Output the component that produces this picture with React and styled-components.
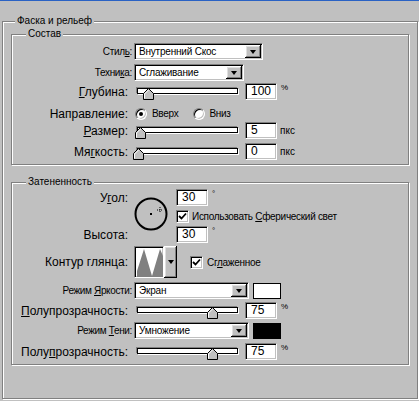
import React from "react";
import styled, { createGlobalStyle } from "styled-components";

const GlobalStyle = createGlobalStyle`
  html, body {
    margin: 0;
    padding: 0;
    background: #c0c0c0;
  }
  body {
    width: 419px;
    height: 401px;
    overflow: hidden;
    font-family: "Liberation Sans", Arial, sans-serif;
    color: #000;
  }
`;

const Window = styled.div`
  width: 419px;
  height: 401px;
  box-sizing: border-box;
  background: #c0c0c0;
  border-top: 1px solid #2a62c4;
  padding: 20px 0 0 2px;
`;

const Frame = styled.div`
  position: relative;
  box-sizing: border-box;
  border: 1px solid #808080;
  box-shadow: inset 1px 1px 0 #fff, 1px 1px 0 #fff;
`;

const OuterGroup = styled(Frame)`
  width: 416px;
  height: 378px;
  padding: 12px 0 0 8px;
`;

const Group = styled(Frame)`
  width: 398px;
  margin-top: ${(p) => p.$mt || 0}px;
  padding: ${(p) => p.$pt}px 0 4px 0;
`;

const Caption = styled.span`
  position: absolute;
  top: -7px;
  left: ${(p) => p.$left}px;
  padding: 0 2px;
  background: #c0c0c0;
  font-size: 10px;
  line-height: 12px;
  white-space: nowrap;
`;

const Row = styled.div`
  display: flex;
  align-items: center;
  height: ${(p) => p.$h || 17}px;
  margin-top: ${(p) => p.$mt || 0}px;
`;

const Label = styled.div`
  width: 120px;
  flex: none;
  box-sizing: border-box;
  margin-right: 2px;
  padding-right: ${(p) => (p.$big ? 4 : 0)}px;
  text-align: right;
  white-space: nowrap;
  font-size: ${(p) => (p.$big ? 12 : 10)}px;
  letter-spacing: ${(p) => (p.$big ? 0 : -0.35)}px;
`;

const Key = styled.u`
  text-decoration: underline;
  text-underline-offset: 1px;
`;

const Sunken = styled.div`
  box-sizing: border-box;
  flex: none;
  background: #fff;
  border: 1px solid;
  border-color: #808080 #fff #fff #808080;
  box-shadow: inset 1px 1px 0 #000, inset -1px -1px 0 #c0c0c0;
`;

const Field = styled(Sunken)`
  width: 32px;
  height: 17px;
  margin-left: ${(p) => p.$ml || 0}px;
  padding-left: 5px;
  font-size: 12px;
  line-height: 15px;
`;

const Select = styled(Sunken)`
  width: ${(p) => p.$w}px;
  height: 17px;
  display: flex;
  align-items: center;
  justify-content: space-between;
  padding: 2px 1px 2px 4px;
  font-size: 10px;
  letter-spacing: -0.2px;
`;

const DropButton = styled.span`
  flex: none;
  width: ${(p) => p.$w || 16}px;
  height: ${(p) => p.$h || 13}px;
  box-sizing: border-box;
  background: #c0c0c0;
  box-shadow: inset -1px -1px 0 #000, inset 1px 1px 0 #fff,
    inset -2px -2px 0 #808080, inset 2px 2px 0 #dfdfdf;
  display: flex;
  align-items: center;
  justify-content: center;

  &::after {
    content: "";
    width: 0;
    height: 0;
    border-left: 3px solid transparent;
    border-right: 3px solid transparent;
    border-top: 4px solid #000;
  }
`;

const Unit = styled.span`
  margin-left: ${(p) => p.$ml || 4}px;
  font-size: ${(p) => p.$size || 10}px;
  align-self: ${(p) => (p.$top ? "flex-start" : "center")};
  line-height: ${(p) => (p.$top ? "10px" : "normal")};
`;

const SliderWrap = styled.div`
  position: relative;
  flex: none;
  width: 108px;
  height: 17px;
  margin-right: 3px;
`;

const Track = styled.div`
  position: absolute;
  left: 3px;
  top: 5px;
  width: 101px;
  height: 6px;
  box-sizing: border-box;
  background: #fff;
  border: 1px solid #000;
  box-shadow: -1px -1px 0 #808080, 1px 1px 0 #fff;
`;

const Thumb = styled.svg`
  position: absolute;
  top: 5px;
`;

const Radio = styled.span`
  position: relative;
  flex: none;
  width: 12px;
  height: 12px;
  box-sizing: border-box;
  border-radius: 50%;
  background: #fff;
  border: 1px solid;
  border-color: #808080 #fff #fff #808080;
  box-shadow: inset 1px 1px 0 #000, inset -1px -1px 0 #c0c0c0;
  margin-left: ${(p) => p.$ml}px;

  &::after {
    content: "";
    display: ${(p) => (p.$on ? "block" : "none")};
    position: absolute;
    left: 3px;
    top: 3px;
    width: 4px;
    height: 4px;
    border-radius: 50%;
    background: #000;
  }
`;

const OptionText = styled.span`
  font-size: 10px;
  letter-spacing: -0.3px;
  margin-left: ${(p) => p.$ml || 4}px;
  white-space: nowrap;
`;

const CheckBox = styled(Sunken)`
  width: 13px;
  height: 13px;
  margin-left: ${(p) => p.$ml || 0}px;
  display: flex;
  align-items: center;
  justify-content: center;
`;

const AngleBlock = styled.div`
  display: grid;
  grid-template-columns: 122px 42px auto;
  grid-template-rows: 17px 20px 17px;
  align-items: center;
`;

const Dial = styled.svg`
  grid-column: 2;
  grid-row: 1 / span 3;
  align-self: start;
  margin-top: 8px;
`;

const Cell = styled.div`
  display: flex;
  align-items: center;
  grid-column: ${(p) => p.$col};
  grid-row: ${(p) => p.$row};
  height: 17px;
`;

const ContourBox = styled(Sunken)`
  width: 30px;
  height: 32px;
  padding: 2px;
`;

const Swatch = styled.span`
  flex: none;
  width: 28px;
  height: 16px;
  box-sizing: border-box;
  margin-left: 4px;
  border: 1px solid #000;
  background: ${(p) => p.$color};
`;

const Slider = ({ frac }) => (
  <SliderWrap>
    <Track />
    <Thumb
      width="11"
      height="12"
      viewBox="0 0 11 12"
      style={{ left: Math.round(99 * frac) - 1 }}
    >
      <polygon
        points="5.5,0.5 10.5,5.5 10.5,11.5 0.5,11.5 0.5,5.5"
        fill="#c0c0c0"
        stroke="#000"
      />
      <polyline points="1.5,10.5 1.5,6 5.5,2" fill="none" stroke="#fff" />
    </Thumb>
  </SliderWrap>
);

const Check = () => (
  <svg width="9" height="9" viewBox="0 0 9 9">
    <path d="M1 4 L3.5 6.5 L8 1.5" fill="none" stroke="#000" strokeWidth="1.8" />
  </svg>
);

const Dropdown = ({ w, children }) => (
  <Select $w={w}>
    <span>{children}</span>
    <DropButton />
  </Select>
);

export default function App() {
  return (
    <>
      <GlobalStyle />
      <Window>
        <OuterGroup>
          <Caption $left={12}>Фаска и рельеф</Caption>

          <Group $pt={8}>
            <Caption $left={14}>Состав</Caption>
            <Row>
              <Label>
                Стил<Key>ь</Key>:
              </Label>
              <Dropdown w={129}>Внутренний Скос</Dropdown>
            </Row>
            <Row $mt={4}>
              <Label>
                Техни<Key>к</Key>а:
              </Label>
              <Dropdown w={110}>Сглаживание</Dropdown>
            </Row>
            <Row $mt={2}>
              <Label $big>
                <Key>Г</Key>лубина:
              </Label>
              <Slider frac={0.1} />
              <Field>100</Field>
              <Unit $size={8} $top>
                %
              </Unit>
            </Row>
            <Row $mt={5}>
              <Label $big>Направление:</Label>
              <Radio $on $ml={1} />
              <OptionText $ml={5}>Вверх</OptionText>
              <Radio $ml={15} />
              <OptionText>Вниз</OptionText>
            </Row>
            <Row>
              <Label $big>
                <Key>Р</Key>азмер:
              </Label>
              <Slider frac={0.02} />
              <Field>5</Field>
              <Unit $ml={3}>пкс</Unit>
            </Row>
            <Row $mt={4}>
              <Label $big>
                Мя<Key>г</Key>кость:
              </Label>
              <Slider frac={0} />
              <Field>0</Field>
              <Unit $ml={3}>пкс</Unit>
            </Row>
          </Group>

          <Group $mt={17} $pt={6}>
            <Caption $left={14}>Затененность</Caption>
            <AngleBlock>
              <Cell $col={1} $row={1}>
                <Label $big>
                  У<Key>г</Key>ол:
                </Label>
              </Cell>
              <Dial width="34" height="34" viewBox="0 0 34 34">
                <circle cx="17" cy="17" r="15.5" fill="none" stroke="#000" strokeWidth="2" />
                <rect x="16" y="16" width="2" height="2" fill="#000" />
                <path d="M26 10 V16 M23 13 H29" stroke="#000" strokeWidth="1" strokeDasharray="1 1" />
              </Dial>
              <Cell $col={3} $row={1}>
                <Field>30</Field>
                <Unit $size={8} $top>
                  °
                </Unit>
              </Cell>
              <Cell $col={3} $row={2}>
                <CheckBox>
                  <Check />
                </CheckBox>
                <OptionText $ml={3}>
                  Использовать <Key>С</Key>ферический свет
                </OptionText>
              </Cell>
              <Cell $col={1} $row={3}>
                <Label $big>Высота:</Label>
              </Cell>
              <Cell $col={3} $row={3}>
                <Field>30</Field>
                <Unit $size={8} $top>
                  °
                </Unit>
              </Cell>
            </AngleBlock>

            <Row $h={32} $mt={3}>
              <Label $big>Контур глянца:</Label>
              <ContourBox>
                <svg width="26" height="28" viewBox="0 0 26 28">
                  <polygon
                    points="0,28 0,22 7,0 15,27 23,0 26,7 26,28"
                    fill="#808080"
                  />
                </svg>
              </ContourBox>
              <DropButton $w={13} $h={32} />
              <CheckBox $ml={13}>
                <Check />
              </CheckBox>
              <OptionText>
                Сг<Key>л</Key>аженное
              </OptionText>
            </Row>

            <Row $mt={4}>
              <Label>
                Режим <Key>Я</Key>ркости:
              </Label>
              <Dropdown w={115}>Экран</Dropdown>
              <Swatch $color="#fff" />
            </Row>
            <Row $mt={3}>
              <Label $big>
                <Key>П</Key>олупрозрачность:
              </Label>
              <Slider frac={0.75} />
              <Field>75</Field>
              <Unit $size={8} $top>
                %
              </Unit>
            </Row>
            <Row $mt={3}>
              <Label>
                Режим <Key>Т</Key>ени:
              </Label>
              <Dropdown w={115}>Умножение</Dropdown>
              <Swatch $color="#000" />
            </Row>
            <Row $mt={4}>
              <Label $big>
                Полу<Key>п</Key>розрачность:
              </Label>
              <Slider frac={0.75} />
              <Field>75</Field>
              <Unit $size={8} $top>
                %
              </Unit>
            </Row>
          </Group>
        </OuterGroup>
      </Window>
    </>
  );
}
